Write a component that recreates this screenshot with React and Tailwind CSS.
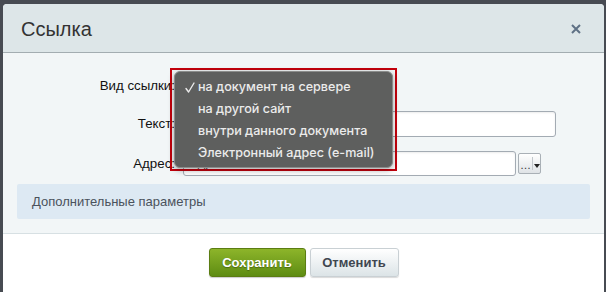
import React from "react";

const menuItems = [
    { label: "на документ на сервере", checked: true },
    { label: "на другой сайт" },
    { label: "внутри данного документа" },
    { label: "Электронный адрес (e-mail)" },
];

const App = () => {
    return (
        <div className="w-[606px] h-[292px] overflow-hidden bg-[#474b52] pt-[4px] pl-[3px] pr-[2px] font-['Liberation_Sans',Arial,sans-serif]">
            <div className="h-full flex flex-col bg-white rounded-t-[4px] overflow-hidden">
                {/* header */}
                <div className="h-[49px] shrink-0 flex items-center justify-between pl-[18px] pr-[23px] bg-[#dde6e8] border-b border-[#a3adb1]">
                    <span className="text-[20px] text-[#333] pt-[1px]">Ссылка</span>
                    <svg width="10" height="10" viewBox="0 0 10 10" className="mt-[1px]">
                        <path d="M1 1 L9 9 M9 1 L1 9" stroke="#5f7185" strokeWidth="2" />
                    </svg>
                </div>

                {/* body */}
                <div className="relative shrink-0 h-[181px] bg-[#f2f6f7] px-[14px] pt-[20px] border-b border-[#d7e0e3]">
                    <div className="flex items-center h-[26px]">
                        <label className="w-[158px] text-right text-[13.3px] text-[#111]">Вид ссылки:</label>
                        <div className="ml-[8px] w-[210px] h-[24px] border border-[#a3abb3] rounded-[3px] bg-white"></div>
                    </div>
                    <div className="flex items-center h-[26px] mt-[12px]">
                        <label className="w-[158px] text-right text-[13.3px] text-[#111]">Текст:</label>
                        <input className="ml-[8px] w-[373px] h-[26px] border border-[#a3abb3] rounded-[3px] bg-white shadow-[inset_0_1px_2px_rgba(0,0,0,0.08)] outline-none px-[5px] text-[13px]" />
                    </div>
                    <div className="flex items-center h-[25px] mt-[14px]">
                        <label className="w-[158px] text-right text-[13.3px] text-[#111]">Адрес:</label>
                        <input
                            className="ml-[8px] w-[333px] h-[25px] border border-[#a3abb3] rounded-[3px] bg-white shadow-[inset_0_1px_2px_rgba(0,0,0,0.08)] outline-none px-[5px] text-[13px] text-[#555]"
                            defaultValue="Адрес ссылки"
                        />
                        <div className="ml-[2px] w-[23px] h-[21px] flex border border-[#a9b0b6] rounded-[2px] bg-gradient-to-b from-white to-[#dfe3e6]">
                            <div className="w-[13px] flex items-end justify-center pb-[2px] text-[11px] leading-none text-[#333]">…</div>
                            <div className="w-px bg-[#c3c8cc] my-[3px]"></div>
                            <div className="flex-1 flex items-center justify-center pt-[4px]">
                                <svg width="6" height="4" viewBox="0 0 6 4"><path d="M0 0 H6 L3 4 Z" fill="#222" /></svg>
                            </div>
                        </div>
                    </div>
                    <div className="mt-[8px] h-[35px] flex items-center px-[15px] bg-[#dde9f3] rounded-[2px] text-[13px] text-[#4a525c]">
                        Дополнительные параметры
                    </div>

                    {/* red highlight around the opened select */}
                    <div className="absolute left-[167px] top-[15px] w-[227px] h-[103px] border-2 border-[#c4000c]"></div>

                    {/* native select popup */}
                    <div className="absolute left-[171px] top-[18px] w-[219px] h-[97px] pt-[4px] bg-[#5e5f5e] border border-[#8b8c8b] rounded-[6px] shadow-[0_2px_6px_rgba(0,0,0,0.35)] font-['Inter','Noto_Sans',sans-serif]">
                        {menuItems.map((item, i) => (
                            <div key={i} className="relative h-[22px] flex items-center pl-[23px] text-[12.6px] font-medium text-[#ebebeb]">
                                {item.checked && (
                                    <svg width="10" height="11" viewBox="0 0 10 11" className="absolute left-[10px] top-[6px]">
                                        <path d="M1 6.5 L3.6 10 L9 1" stroke="#ebebeb" strokeWidth="1.4" fill="none" strokeLinecap="round" strokeLinejoin="round" />
                                    </svg>
                                )}
                                {item.label}
                            </div>
                        ))}
                    </div>
                </div>

                {/* footer */}
                <div className="flex justify-center gap-[4px] pt-[14px] bg-white flex-1">
                    <button className="w-[97px] h-[29px] rounded-[3px] border border-[#5b7d12] bg-gradient-to-b from-[#8db52a] to-[#5e8c12] text-white text-[13px] font-bold [text-shadow:0_1px_1px_rgba(0,0,0,0.3)] shadow-[0_1px_1px_rgba(0,0,0,0.2)]">
                        Сохранить
                    </button>
                    <button className="w-[89px] h-[29px] rounded-[3px] border border-[#c9d0d4] bg-gradient-to-b from-white to-[#dce4e7] text-[#3f4750] text-[13px] font-bold shadow-[0_1px_1px_rgba(0,0,0,0.15)]">
                        Отменить
                    </button>
                </div>
            </div>
        </div>
    );
};

export default App;
